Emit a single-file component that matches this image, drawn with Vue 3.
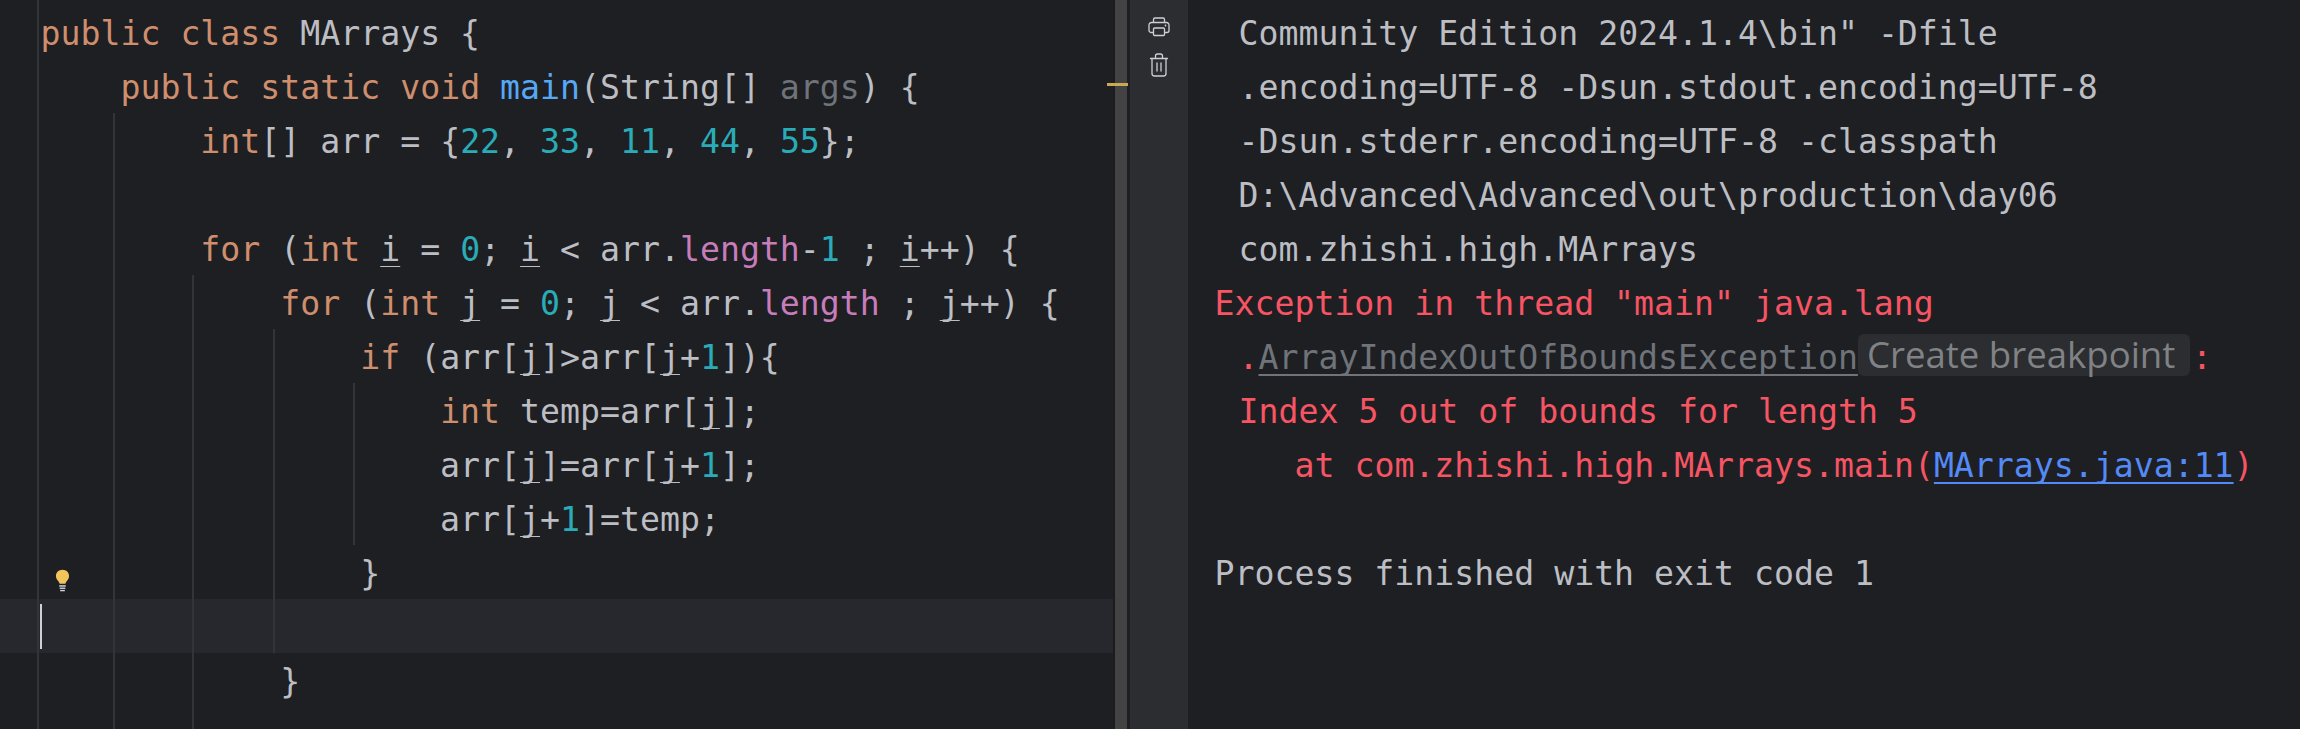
<script setup>
const parse = (s) =>
  s.split('~').map((part, i) => {
    if (i % 2 === 0) return { c: '', t: part }
    const [c, t] = part.split('|')
    return { c, t }
  }).filter((p) => p.t !== '')

const code = [
  '~k|public~ ~k|class~ MArrays {',
  '    ~k|public~ ~k|static~ ~k|void~ ~m|main~(String[] ~g|args~) {',
  '        ~k|int~[] arr = {~n|22~, ~n|33~, ~n|11~, ~n|44~, ~n|55~};',
  '',
  '        ~k|for~ (~k|int~ ~u|i~ = ~n|0~; ~u|i~ < arr.~f|length~-~n|1~ ; ~u|i~++) {',
  '            ~k|for~ (~k|int~ ~u|j~ = ~n|0~; ~u|j~ < arr.~f|length~ ; ~u|j~++) {',
  '                ~k|if~ (arr[~u|j~]>arr[~u|j~+~n|1~]){',
  '                    ~k|int~ temp=arr[~u|j~];',
  '                    arr[~u|j~]=arr[~u|j~+~n|1~];',
  '                    arr[~u|j~+~n|1~]=temp;',
  '                }',
  '',
  '            }',
].map(parse)

const guides = [
  { x: 37, top: 0, height: 729 },
  { x: 113, top: 113, height: 616 },
  { x: 192, top: 275, height: 454 },
  { x: 273, top: 329, height: 324 },
  { x: 353, top: 383, height: 162 },
]

const consoleLines = [
  { cls: 'hang', t: 'Community Edition 2024.1.4\\bin" -Dfile' },
  { cls: 'hang', t: '.encoding=UTF-8 -Dsun.stdout.encoding=UTF-8' },
  { cls: 'hang', t: '-Dsun.stderr.encoding=UTF-8 -classpath' },
  { cls: 'hang', t: 'D:\\Advanced\\Advanced\\out\\production\\day06' },
  { cls: 'hang', t: 'com.zhishi.high.MArrays' },
  { cls: 'err', t: 'Exception in thread "main" java.lang' },
]
</script>

<template>
  <div class="ide">
    <section class="editor">
      <i
        v-for="g in guides"
        :key="g.x"
        class="guide"
        :style="{ left: g.x + 'px', top: g.top + 'px', height: g.height + 'px' }"
      ></i>
      <div
        v-for="(line, i) in code"
        :key="i"
        class="row"
        :class="{ current: i === 11 }"
      >
        <span v-for="(p, j) in line" :key="j" :class="p.c">{{ p.t }}</span>
        <i v-if="i === 11" class="caret"></i>
        <svg v-if="i === 10" class="bulb" viewBox="0 0 16 24" width="15" height="23">
          <path d="M8 0.5C3.9 0.5 1 3.5 1 7.1c0 2.6 1.4 4.3 2.6 5.8.7.9 1.1 1.6 1.3 2.6h6.2c.2-1 .6-1.7 1.3-2.6C13.600 11.400 15 9.700 15 7.100 15 3.500 12.100.5 8 .5z" fill="#f2c55c" />
          <rect x="4.500" y="17" width="7" height="1.600" fill="#ced0d6" />
          <rect x="5" y="19.500" width="6" height="1.500" fill="#ced0d6" />
          <rect x="5.500" y="22" width="5" height="1.500" fill="#ced0d6" />
        </svg>
      </div>
    </section>

    <div class="scrollbar">
      <i class="mark"></i>
    </div>

    <aside class="tools">
      <svg viewBox="0 0 22 20" width="22" height="20">
        <g fill="none" stroke="#ced0d6" stroke-width="1.300" stroke-linejoin="round">
          <path d="M5.500 5.500V2.500a1.500 1.500 0 0 1 1.500-1.500h8a1.500 1.500 0 0 1 1.500 1.500v3" />
          <path d="M5 15.500H3a2 2 0 0 1-2-2V8a2.500 2.500 0 0 1 2.500-2.500h15A2.500 2.500 0 0 1 21 8v5.500a2 2 0 0 1-2 2h-2" />
          <rect x="5.500" y="11" width="11" height="7.500" rx="1" />
        </g>
        <circle cx="17.500" cy="8.500" r="0.900" fill="#ced0d6" />
      </svg>
      <svg viewBox="0 0 20 24" width="20" height="24">
        <g fill="none" stroke="#ced0d6" stroke-width="1.300" stroke-linejoin="round" stroke-linecap="round">
          <path d="M1.500 5.500h17" />
          <path d="M6.500 5V3a2 2 0 0 1 2-2h3a2 2 0 0 1 2 2v2" />
          <path d="M3 5.500V20.500a2.500 2.500 0 0 0 2.500 2.500h9a2.500 2.500 0 0 0 2.500-2.500V5.500" />
          <path d="M8 10v8M12 10v8" />
        </g>
      </svg>
    </aside>

    <section class="console">
      <div v-for="(l, i) in consoleLines" :key="i" class="row" :class="l.cls">{{ l.t }}</div>
      <div class="row err hang">.<span class="cls">ArrayIndexOutOfBoundsException</span><span class="inlay">Create breakpoint</span><span class="colon">:</span></div>
      <div class="row err hang">Index 5 out of bounds for length 5</div>
      <div class="row err tab">at com.zhishi.high.MArrays.main(<span class="link">MArrays.java:11</span>)</div>
      <div class="row"></div>
      <div class="row">Process finished with exit code 1</div>
    </section>
  </div>
</template>

<style>
html, body { margin: 0; background: #1e1f22; }
</style>

<style scoped>
.ide {
  display: flex;
  width: 2300px;
  height: 729px;
  overflow: hidden;
  background: #1e1f22;
  color: #bcbec4;
  font-family: "DejaVu Sans Mono", "Liberation Mono", monospace;
  font-size: 33.2px;
}
.row {
  height: 54px;
  line-height: 58px;
  white-space: pre;
  position: relative;
}
.editor {
  position: relative;
  width: 1115px;
  flex: none;
  padding: 5px 0 0 41px;
  box-sizing: border-box;
  border-right: 2px solid #1b1c1f;
}
.editor .row { margin-left: -41px; padding-left: 40.5px; }
.current { background: #26282e; }
.guide {
  position: absolute;
  width: 2px;
  background: #313438;
  z-index: 1;
}
.k { color: #cf8e6d; }
.m { color: #56a8f5; }
.n { color: #2aacb8; }
.f { color: #c77dbb; }
.g { color: #6f737a; }
.u {
  text-decoration: underline;
  text-decoration-thickness: 1px;
  text-underline-offset: 5px;
  text-decoration-skip-ink: none;
}
.caret {
  position: absolute;
  left: 40px;
  top: 5px;
  width: 2px;
  height: 45px;
  background: #ced0d6;
  z-index: 2;
}
.bulb {
  position: absolute;
  left: 55px;
  top: 24px;
}
.scrollbar {
  position: relative;
  width: 12px;
  flex: none;
  background: #434343;
  margin-right: 3px;
}
.mark {
  position: absolute;
  left: -8px;
  top: 83px;
  width: 21px;
  height: 3px;
  background: #c9a856;
}
.tools {
  width: 58px;
  flex: none;
  background: #2b2d30;
  display: flex;
  flex-direction: column;
  align-items: center;
  gap: 16px;
  padding-top: 17px;
  box-sizing: border-box;
}
.console {
  flex: 1;
  padding: 5px 0 0 26.5px;
}
.hang { padding-left: 24px; }
.tab { padding-left: 80px; }
.err { color: #f75464; }
.cls {
  color: #6f737a;
  text-decoration: underline;
  text-decoration-thickness: 2px;
  text-underline-offset: 5px;
  text-decoration-skip-ink: none;
}
.inlay {
  display: inline-block;
  height: 42px;
  line-height: 41px;
  vertical-align: 1px;
  width: 332px;
  padding-left: 9px;
  box-sizing: border-box;
  background: #2b2d30;
  border-radius: 6px;
  color: #808285;
  font-family: "Open Sans", "Noto Sans", sans-serif;
  font-size: 36.6px;
  white-space: nowrap;
}
.colon { margin-left: 2px; }
.link {
  color: #548af7;
  text-decoration: underline;
  text-decoration-thickness: 2px;
  text-underline-offset: 5px;
  text-decoration-skip-ink: none;
}
</style>
